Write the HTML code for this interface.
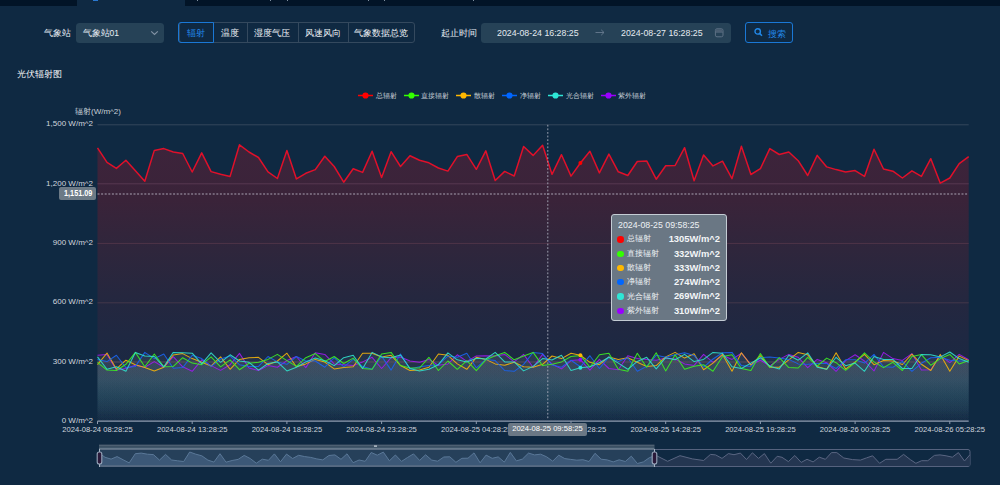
<!DOCTYPE html>
<html><head><meta charset="utf-8"><style>
*{box-sizing:border-box;margin:0;padding:0}
html,body{width:1000px;height:485px;overflow:hidden;background:#0f2942;font-family:"Liberation Sans", sans-serif;color:#fff}
.a{position:absolute;white-space:nowrap}
.t{position:absolute;white-space:nowrap;line-height:12px}
.sx{display:inline-block;transform-origin:0 50%}
</style></head><body>
<div class="a" style="left:0;top:0;width:1000px;height:6px;background:#021427"></div>
<div class="a" style="left:77px;top:0;width:108px;height:6px;background:#0f2942"></div>
<div class="a" style="left:93px;top:0;width:5px;height:1px;background:#2a78d0"></div>
<div class="a" style="left:197px;top:0;width:1px;height:1px;background:#8090a0"></div>
<div class="a" style="left:270px;top:0;width:1px;height:1px;background:#8090a0"></div>
<div class="a" style="left:287px;top:0;width:1px;height:1px;background:#8090a0"></div>
<div class="a" style="left:368px;top:0;width:1px;height:1px;background:#8090a0"></div>
<div class="a" style="left:384px;top:0;width:1px;height:1px;background:#8090a0"></div>
<div class="a" style="left:473px;top:0;width:1px;height:1px;background:#8090a0"></div>
<div class="t" style="left:44px;top:27px;font-size:8.5px;color:#e8eef4">气象站</div>
<div class="a" style="left:76px;top:22.5px;width:88px;height:20px;background:#264257;border-radius:3.5px"></div>
<div class="t" style="left:82.5px;top:27px;font-size:8.5px;color:#e8eef4">气象站01</div>
<svg class="a" style="left:150px;top:30px" width="9" height="6"><path d="M1.2 1.4 L4.5 4.4 L7.8 1.4" fill="none" stroke="#8292a4" stroke-width="1.2"/></svg>
<div class="a" style="left:178.5px;top:22.2px;width:236px;height:20.6px;border:1px solid #34495e;border-radius:3px"></div>
<div class="a" style="left:246.6px;top:23px;width:1px;height:19.5px;background:#34495e"></div>
<div class="a" style="left:297.5px;top:23px;width:1px;height:19.5px;background:#34495e"></div>
<div class="a" style="left:347.5px;top:23px;width:1px;height:19.5px;background:#34495e"></div>
<div class="a" style="left:178.3px;top:22.2px;width:35.7px;height:20.6px;border:1.5px solid #1a78d6;border-radius:3px 0 0 3px"></div>
<div class="t" style="left:178.5px;width:35.5px;top:27.2px;text-align:center;font-size:8.5px;color:#2288e8">辐射</div>
<div class="t" style="left:214px;width:32.599999999999994px;top:27.2px;text-align:center;font-size:8.5px;color:#eef2f6">温度</div>
<div class="t" style="left:246.6px;width:50.900000000000006px;top:27.2px;text-align:center;font-size:8.5px;color:#eef2f6">湿度气压</div>
<div class="t" style="left:297.5px;width:50.0px;top:27.2px;text-align:center;font-size:8.5px;color:#eef2f6">风速风向</div>
<div class="t" style="left:347.5px;width:67.0px;top:27.2px;text-align:center;font-size:8.5px;color:#eef2f6">气象数据总览</div>
<div class="t" style="left:440.5px;top:27px;font-size:8.5px;color:#e8eef4">起止时间</div>
<div class="a" style="left:481px;top:22.5px;width:250px;height:20.3px;background:#264257;border-radius:3.5px"></div>
<div class="t" style="left:497.4px;top:26.5px;font-size:9.9px;color:#e4eaf0"><span class="sx" style="transform:scaleX(.89)">2024-08-24 16:28:25</span></div>
<svg class="a" style="left:594px;top:28px" width="12" height="9"><path d="M1.5 4.5 H10 M7.2 1.8 L10 4.5 L7.2 7.2" fill="none" stroke="#667a8e" stroke-width="0.9"/></svg>
<div class="t" style="left:620.6px;top:26.5px;font-size:9.9px;color:#e4eaf0"><span class="sx" style="transform:scaleX(.89)">2024-08-27 16:28:25</span></div>
<svg class="a" style="left:714px;top:28px" width="11" height="10"><rect x="1.4" y="0.8" width="7.6" height="8" rx="1.6" fill="none" stroke="#5e7286" stroke-width="1"/><rect x="1.9" y="1.3" width="6.6" height="2.6" fill="#4a5e72"/><path d="M1.6 4.2 H8.8" stroke="#5e7286" stroke-width="0.8"/></svg>
<div class="a" style="left:745px;top:22.3px;width:47.6px;height:20.4px;border:1.4px solid #1a78d6;border-radius:3px"></div>
<svg class="a" style="left:753px;top:28px" width="10" height="10"><circle cx="4.7" cy="3.4" r="2.7" fill="none" stroke="#2288e8" stroke-width="1.4"/><path d="M6.6 5.4 L9 7.8" stroke="#2288e8" stroke-width="1.5"/></svg>
<div class="t" style="left:767.6px;top:27.5px;font-size:8.5px;color:#2288e8">搜索</div>
<div class="t" style="left:16.5px;top:68px;font-size:9.4px;color:#f4f6f8">光伏辐射图</div>
<svg class="a" style="left:358.2px;top:91px" width="16" height="9"><path d="M0 4.5 H15" stroke="#ff0000" stroke-width="1.5"/><circle cx="7.5" cy="4.5" r="3.1" fill="#ff0000"/></svg>
<div class="t" style="left:375.8px;top:89.5px;font-size:7.3px;color:#c8d0d8">总辐射</div>
<svg class="a" style="left:403.7px;top:91px" width="16" height="9"><path d="M0 4.5 H15" stroke="#33ff00" stroke-width="1.5"/><circle cx="7.5" cy="4.5" r="3.1" fill="#33ff00"/></svg>
<div class="t" style="left:421px;top:89.5px;font-size:7.3px;color:#c8d0d8">直接辐射</div>
<svg class="a" style="left:456.4px;top:91px" width="16" height="9"><path d="M0 4.5 H15" stroke="#ffb800" stroke-width="1.5"/><circle cx="7.5" cy="4.5" r="3.1" fill="#ffb800"/></svg>
<div class="t" style="left:474.4px;top:89.5px;font-size:7.3px;color:#c8d0d8">散辐射</div>
<svg class="a" style="left:502.2px;top:91px" width="16" height="9"><path d="M0 4.5 H15" stroke="#0066ff" stroke-width="1.5"/><circle cx="7.5" cy="4.5" r="3.1" fill="#0066ff"/></svg>
<div class="t" style="left:520px;top:89.5px;font-size:7.3px;color:#c8d0d8">净辐射</div>
<svg class="a" style="left:548px;top:91px" width="16" height="9"><path d="M0 4.5 H15" stroke="#2ee6d6" stroke-width="1.5"/><circle cx="7.5" cy="4.5" r="3.1" fill="#2ee6d6"/></svg>
<div class="t" style="left:565.7px;top:89.5px;font-size:7.3px;color:#c8d0d8">光合辐射</div>
<svg class="a" style="left:600.7px;top:91px" width="16" height="9"><path d="M0 4.5 H15" stroke="#9900ff" stroke-width="1.5"/><circle cx="7.5" cy="4.5" r="3.1" fill="#9900ff"/></svg>
<div class="t" style="left:618.4px;top:89.5px;font-size:7.3px;color:#c8d0d8">紫外辐射</div>
<div class="t" style="left:75px;top:105.5px;font-size:8px;color:#c8d0d8">辐射(W/m^2)</div>
<div class="t" style="right:907px;top:118.4px;text-align:right;font-size:8px;color:#d0d6de">1,500 W/m^2</div>
<div class="t" style="right:907px;top:177.8px;text-align:right;font-size:8px;color:#d0d6de">1,200 W/m^2</div>
<div class="t" style="right:907px;top:237.1px;text-align:right;font-size:8px;color:#d0d6de">900 W/m^2</div>
<div class="t" style="right:907px;top:296.4px;text-align:right;font-size:8px;color:#d0d6de">600 W/m^2</div>
<div class="t" style="right:907px;top:355.7px;text-align:right;font-size:8px;color:#d0d6de">300 W/m^2</div>
<div class="t" style="right:907px;top:415.0px;text-align:right;font-size:8px;color:#d0d6de">0 W/m^2</div>
<svg class="a" style="left:0;top:0" width="1000" height="485">
<defs>
<linearGradient id="gr" x1="0" y1="145" x2="0" y2="419.3" gradientUnits="userSpaceOnUse"><stop offset="0" stop-color="#3d243b"/><stop offset="0.2" stop-color="#3a2339"/><stop offset="0.38" stop-color="#2f263c"/><stop offset="0.55" stop-color="#25273f"/><stop offset="0.69" stop-color="#1f2842"/><stop offset="1" stop-color="#142a44"/></linearGradient>
<linearGradient id="gl" x1="0" y1="352" x2="0" y2="419.3" gradientUnits="userSpaceOnUse"><stop offset="0" stop-color="#8ba8ae" stop-opacity="0.07"/><stop offset="0.297" stop-color="#8ba8ae" stop-opacity="0.066"/><stop offset="0.416" stop-color="#74a8b1" stop-opacity="0.069"/><stop offset="0.669" stop-color="#57a8af" stop-opacity="0.046"/><stop offset="0.862" stop-color="#57a8af" stop-opacity="0.025"/><stop offset="0.92" stop-color="#57a8af" stop-opacity="0.014"/><stop offset="1" stop-color="#57a8af" stop-opacity="0.005"/></linearGradient>
</defs>
<path d="M97.5 147.9 L107.0 162.4 L116.4 168.4 L125.9 160.3 L135.4 170.8 L144.8 181.3 L154.3 150.4 L163.8 148.6 L173.3 152.0 L182.7 153.5 L192.2 172.0 L201.7 152.9 L211.1 171.6 L220.6 174.3 L230.1 176.4 L239.5 144.8 L249.0 152.0 L258.5 157.5 L268.0 171.8 L277.4 178.5 L286.9 150.4 L296.4 178.9 L305.8 173.3 L315.3 169.6 L324.8 156.2 L334.2 166.5 L343.7 182.2 L353.2 168.7 L362.6 172.4 L372.1 151.3 L381.6 177.4 L391.1 151.7 L400.5 166.5 L410.0 155.7 L419.5 160.3 L428.9 162.8 L438.4 168.0 L447.9 171.1 L457.3 156.6 L466.8 154.4 L476.3 169.3 L485.8 150.8 L495.2 180.5 L504.7 171.4 L514.2 176.0 L523.6 146.5 L533.1 155.4 L542.6 145.2 L552.0 174.3 L561.5 154.7 L571.0 176.1 L580.4 163.0 L589.9 151.3 L599.4 172.9 L608.9 154.1 L618.3 171.8 L627.8 175.5 L637.3 161.5 L646.7 160.9 L656.2 179.2 L665.7 165.7 L675.1 165.5 L684.6 147.7 L694.1 180.7 L703.6 155.0 L713.0 165.9 L722.5 161.2 L732.0 178.6 L741.4 146.3 L750.9 174.5 L760.4 168.6 L769.8 148.6 L779.3 154.5 L788.8 152.0 L798.2 160.7 L807.7 175.5 L817.2 155.4 L826.7 166.9 L836.1 169.6 L845.6 172.1 L855.1 170.6 L864.5 176.4 L874.0 149.2 L883.5 169.0 L892.9 171.2 L902.4 178.0 L911.9 170.8 L921.4 176.4 L930.8 158.7 L940.3 183.2 L949.8 178.0 L959.2 163.6 L968.7 156.6 L968.7 421.0 L97.5 421.0 Z" fill="url(#gr)"/>
<path d="M97.5 355.3 L107.0 354.4 L116.4 370.1 L125.9 368.5 L135.4 365.2 L144.8 367.2 L154.3 361.6 L163.8 367.2 L173.3 356.7 L182.7 366.8 L192.2 371.3 L201.7 359.8 L211.1 365.6 L220.6 370.4 L230.1 364.7 L239.5 353.4 L249.0 368.0 L258.5 370.5 L268.0 365.6 L277.4 367.2 L286.9 360.6 L296.4 356.5 L305.8 367.6 L315.3 352.8 L324.8 354.4 L334.2 363.9 L343.7 364.7 L353.2 365.6 L362.6 361.9 L372.1 357.3 L381.6 368.5 L391.1 357.7 L400.5 357.1 L410.0 361.0 L419.5 362.3 L428.9 359.4 L438.4 365.2 L447.9 363.9 L457.3 354.8 L466.8 361.4 L476.3 355.9 L485.8 355.7 L495.2 356.1 L504.7 354.4 L514.2 361.9 L523.6 354.4 L533.1 367.2 L542.6 354.4 L552.0 364.0 L561.5 368.9 L571.0 360.6 L580.4 359.7 L589.9 370.1 L599.4 359.4 L608.9 368.5 L618.3 369.7 L627.8 355.7 L637.3 358.6 L646.7 359.4 L656.2 360.2 L665.7 358.1 L675.1 359.0 L684.6 363.9 L694.1 365.4 L703.6 354.4 L713.0 362.3 L722.5 355.3 L732.0 359.4 L741.4 353.2 L750.9 364.7 L760.4 360.2 L769.8 366.0 L779.3 359.4 L788.8 354.4 L798.2 357.3 L807.7 367.6 L817.2 359.4 L826.7 362.7 L836.1 371.3 L845.6 360.6 L855.1 354.8 L864.5 361.0 L874.0 370.9 L883.5 352.4 L892.9 358.6 L902.4 360.4 L911.9 353.6 L921.4 370.0 L930.8 369.7 L940.3 355.3 L949.8 362.7 L959.2 354.4 L968.7 359.8 L968.7 421.0 L97.5 421.0 Z" fill="url(#gl)"/>
<path d="M97.5 364.7 L107.0 353.0 L116.4 368.9 L125.9 360.2 L135.4 364.7 L144.8 367.6 L154.3 370.9 L163.8 367.2 L173.3 355.0 L182.7 353.6 L192.2 358.6 L201.7 362.3 L211.1 366.0 L220.6 356.9 L230.1 369.3 L239.5 359.4 L249.0 357.7 L258.5 357.3 L268.0 364.7 L277.4 361.0 L286.9 353.2 L296.4 366.8 L305.8 363.9 L315.3 359.4 L324.8 362.1 L334.2 368.9 L343.7 367.6 L353.2 366.8 L362.6 353.2 L372.1 353.2 L381.6 356.9 L391.1 355.3 L400.5 365.5 L410.0 370.5 L419.5 370.1 L428.9 367.2 L438.4 354.0 L447.9 355.3 L457.3 363.9 L466.8 369.3 L476.3 357.3 L485.8 359.4 L495.2 363.9 L504.7 365.2 L514.2 362.3 L523.6 366.8 L533.1 367.2 L542.6 364.3 L552.0 356.0 L561.5 358.6 L571.0 353.2 L580.4 355.2 L589.9 362.3 L599.4 364.7 L608.9 356.9 L618.3 359.4 L627.8 357.7 L637.3 362.3 L646.7 366.4 L656.2 365.6 L665.7 356.9 L675.1 352.4 L684.6 358.1 L694.1 353.8 L703.6 369.7 L713.0 363.1 L722.5 354.4 L732.0 371.2 L741.4 352.8 L750.9 365.2 L760.4 355.7 L769.8 367.2 L779.3 367.2 L788.8 359.8 L798.2 352.4 L807.7 354.8 L817.2 366.4 L826.7 369.3 L836.1 352.8 L845.6 369.1 L855.1 361.9 L864.5 354.4 L874.0 364.7 L883.5 360.6 L892.9 361.0 L902.4 364.5 L911.9 354.2 L921.4 364.3 L930.8 370.5 L940.3 354.4 L949.8 371.3 L959.2 356.1 L968.7 360.6 L968.7 421.0 L97.5 421.0 Z" fill="url(#gl)"/>
<path d="M97.5 359.4 L107.0 361.6 L116.4 355.3 L125.9 367.6 L135.4 366.4 L144.8 352.4 L154.3 358.6 L163.8 354.0 L173.3 368.2 L182.7 367.6 L192.2 355.3 L201.7 358.6 L211.1 366.4 L220.6 359.0 L230.1 356.1 L239.5 364.7 L249.0 366.6 L258.5 366.4 L268.0 356.5 L277.4 361.9 L286.9 364.3 L296.4 356.5 L305.8 361.0 L315.3 361.0 L324.8 367.2 L334.2 357.7 L343.7 366.8 L353.2 359.4 L362.6 366.4 L372.1 369.3 L381.6 356.1 L391.1 370.1 L400.5 354.0 L410.0 368.9 L419.5 366.8 L428.9 365.6 L438.4 364.7 L447.9 356.1 L457.3 357.3 L466.8 353.2 L476.3 367.8 L485.8 359.4 L495.2 360.6 L504.7 370.5 L514.2 371.3 L523.6 364.3 L533.1 352.4 L542.6 353.6 L552.0 365.1 L561.5 367.2 L571.0 360.2 L580.4 366.8 L589.9 355.7 L599.4 368.5 L608.9 356.9 L618.3 361.4 L627.8 357.7 L637.3 371.3 L646.7 366.4 L656.2 355.3 L665.7 357.3 L675.1 354.8 L684.6 352.8 L694.1 355.4 L703.6 367.2 L713.0 359.0 L722.5 352.8 L732.0 352.4 L741.4 365.6 L750.9 366.4 L760.4 357.7 L769.8 357.1 L779.3 358.1 L788.8 359.4 L798.2 363.9 L807.7 364.3 L817.2 363.5 L826.7 363.5 L836.1 368.5 L845.6 359.8 L855.1 359.8 L864.5 363.1 L874.0 354.4 L883.5 366.8 L892.9 367.2 L902.4 361.4 L911.9 371.3 L921.4 363.3 L930.8 357.7 L940.3 357.3 L949.8 360.2 L959.2 361.0 L968.7 361.0 L968.7 421.0 L97.5 421.0 Z" fill="url(#gl)"/>
<path d="M97.5 362.3 L107.0 370.1 L116.4 370.5 L125.9 364.3 L135.4 352.4 L144.8 366.8 L154.3 354.0 L163.8 366.8 L173.3 366.4 L182.7 357.7 L192.2 363.1 L201.7 364.7 L211.1 356.9 L220.6 366.8 L230.1 359.8 L239.5 369.7 L249.0 363.3 L258.5 362.3 L268.0 359.4 L277.4 354.4 L286.9 360.6 L296.4 366.4 L305.8 357.7 L315.3 353.6 L324.8 361.5 L334.2 356.5 L343.7 363.5 L353.2 358.1 L362.6 368.5 L372.1 369.3 L381.6 354.0 L391.1 352.4 L400.5 365.6 L410.0 368.0 L419.5 368.0 L428.9 357.3 L438.4 370.5 L447.9 361.0 L457.3 369.3 L466.8 360.6 L476.3 370.7 L485.8 359.8 L495.2 355.7 L504.7 352.4 L514.2 359.8 L523.6 356.1 L533.1 352.4 L542.6 365.6 L552.0 364.3 L561.5 361.9 L571.0 356.5 L580.4 355.4 L589.9 367.2 L599.4 354.8 L608.9 353.2 L618.3 369.3 L627.8 371.3 L637.3 353.2 L646.7 367.2 L656.2 352.8 L665.7 370.9 L675.1 354.8 L684.6 369.3 L694.1 366.2 L703.6 364.7 L713.0 371.2 L722.5 356.5 L732.0 354.8 L741.4 368.5 L750.9 370.5 L760.4 353.6 L769.8 367.4 L779.3 357.7 L788.8 367.6 L798.2 368.0 L807.7 357.3 L817.2 366.0 L826.7 358.1 L836.1 362.7 L845.6 370.3 L855.1 362.7 L864.5 352.8 L874.0 361.9 L883.5 367.6 L892.9 362.3 L902.4 370.5 L911.9 356.5 L921.4 354.6 L930.8 365.2 L940.3 358.6 L949.8 354.4 L959.2 363.9 L968.7 360.6 L968.7 421.0 L97.5 421.0 Z" fill="url(#gl)"/>
<path d="M97.5 356.9 L107.0 369.3 L116.4 366.8 L125.9 371.2 L135.4 352.4 L144.8 356.1 L154.3 356.5 L163.8 366.8 L173.3 352.4 L182.7 352.8 L192.2 353.2 L201.7 363.9 L211.1 352.8 L220.6 362.3 L230.1 354.8 L239.5 361.0 L249.0 362.3 L258.5 370.1 L268.0 363.5 L277.4 361.9 L286.9 370.9 L296.4 367.2 L305.8 361.9 L315.3 358.1 L324.8 360.8 L334.2 365.6 L343.7 357.7 L353.2 355.3 L362.6 368.5 L372.1 352.4 L381.6 356.9 L391.1 357.7 L400.5 355.0 L410.0 368.5 L419.5 370.9 L428.9 369.3 L438.4 364.7 L447.9 352.8 L457.3 359.8 L466.8 361.9 L476.3 358.3 L485.8 359.0 L495.2 352.4 L504.7 361.9 L514.2 361.9 L523.6 370.9 L533.1 366.4 L542.6 358.6 L552.0 360.0 L561.5 355.3 L571.0 370.5 L580.4 367.8 L589.9 366.8 L599.4 362.7 L608.9 357.3 L618.3 363.1 L627.8 369.3 L637.3 361.4 L646.7 357.3 L656.2 368.9 L665.7 357.7 L675.1 359.8 L684.6 354.4 L694.1 361.6 L703.6 359.4 L713.0 352.4 L722.5 353.2 L732.0 366.8 L741.4 368.5 L750.9 363.1 L760.4 357.7 L769.8 366.2 L779.3 368.9 L788.8 355.3 L798.2 360.2 L807.7 352.8 L817.2 367.2 L826.7 369.3 L836.1 357.3 L845.6 365.7 L855.1 363.1 L864.5 371.3 L874.0 356.5 L883.5 359.4 L892.9 359.4 L902.4 368.5 L911.9 368.5 L921.4 354.5 L930.8 354.8 L940.3 356.9 L949.8 352.0 L959.2 358.6 L968.7 362.3 L968.7 421.0 L97.5 421.0 Z" fill="url(#gl)"/>
<g stroke-width="1"><path d="M97.5 124.8 H968.7" stroke="#34475c"/><path d="M97.5 183.8 H968.7" stroke="#583850"/><path d="M97.5 243.4 H968.7" stroke="#4f3448"/><path d="M97.5 302.8 H968.7" stroke="#44384a"/><path d="M97.5 362.0 H968.7" stroke="#5a4a5c"/></g>
<path d="M97.5 194 H968.7" stroke="#aaa4b4" stroke-width="1" stroke-dasharray="2 1.6"/>
<g fill="none" stroke-width="1.05" stroke-linejoin="round" stroke-opacity="0.9">
<path d="M97.5 355.3 L107.0 354.4 L116.4 370.1 L125.9 368.5 L135.4 365.2 L144.8 367.2 L154.3 361.6 L163.8 367.2 L173.3 356.7 L182.7 366.8 L192.2 371.3 L201.7 359.8 L211.1 365.6 L220.6 370.4 L230.1 364.7 L239.5 353.4 L249.0 368.0 L258.5 370.5 L268.0 365.6 L277.4 367.2 L286.9 360.6 L296.4 356.5 L305.8 367.6 L315.3 352.8 L324.8 354.4 L334.2 363.9 L343.7 364.7 L353.2 365.6 L362.6 361.9 L372.1 357.3 L381.6 368.5 L391.1 357.7 L400.5 357.1 L410.0 361.0 L419.5 362.3 L428.9 359.4 L438.4 365.2 L447.9 363.9 L457.3 354.8 L466.8 361.4 L476.3 355.9 L485.8 355.7 L495.2 356.1 L504.7 354.4 L514.2 361.9 L523.6 354.4 L533.1 367.2 L542.6 354.4 L552.0 364.0 L561.5 368.9 L571.0 360.6 L580.4 359.7 L589.9 370.1 L599.4 359.4 L608.9 368.5 L618.3 369.7 L627.8 355.7 L637.3 358.6 L646.7 359.4 L656.2 360.2 L665.7 358.1 L675.1 359.0 L684.6 363.9 L694.1 365.4 L703.6 354.4 L713.0 362.3 L722.5 355.3 L732.0 359.4 L741.4 353.2 L750.9 364.7 L760.4 360.2 L769.8 366.0 L779.3 359.4 L788.8 354.4 L798.2 357.3 L807.7 367.6 L817.2 359.4 L826.7 362.7 L836.1 371.3 L845.6 360.6 L855.1 354.8 L864.5 361.0 L874.0 370.9 L883.5 352.4 L892.9 358.6 L902.4 360.4 L911.9 353.6 L921.4 370.0 L930.8 369.7 L940.3 355.3 L949.8 362.7 L959.2 354.4 L968.7 359.8" stroke="#9d1aee"/>
<path d="M97.5 364.7 L107.0 353.0 L116.4 368.9 L125.9 360.2 L135.4 364.7 L144.8 367.6 L154.3 370.9 L163.8 367.2 L173.3 355.0 L182.7 353.6 L192.2 358.6 L201.7 362.3 L211.1 366.0 L220.6 356.9 L230.1 369.3 L239.5 359.4 L249.0 357.7 L258.5 357.3 L268.0 364.7 L277.4 361.0 L286.9 353.2 L296.4 366.8 L305.8 363.9 L315.3 359.4 L324.8 362.1 L334.2 368.9 L343.7 367.6 L353.2 366.8 L362.6 353.2 L372.1 353.2 L381.6 356.9 L391.1 355.3 L400.5 365.5 L410.0 370.5 L419.5 370.1 L428.9 367.2 L438.4 354.0 L447.9 355.3 L457.3 363.9 L466.8 369.3 L476.3 357.3 L485.8 359.4 L495.2 363.9 L504.7 365.2 L514.2 362.3 L523.6 366.8 L533.1 367.2 L542.6 364.3 L552.0 356.0 L561.5 358.6 L571.0 353.2 L580.4 355.2 L589.9 362.3 L599.4 364.7 L608.9 356.9 L618.3 359.4 L627.8 357.7 L637.3 362.3 L646.7 366.4 L656.2 365.6 L665.7 356.9 L675.1 352.4 L684.6 358.1 L694.1 353.8 L703.6 369.7 L713.0 363.1 L722.5 354.4 L732.0 371.2 L741.4 352.8 L750.9 365.2 L760.4 355.7 L769.8 367.2 L779.3 367.2 L788.8 359.8 L798.2 352.4 L807.7 354.8 L817.2 366.4 L826.7 369.3 L836.1 352.8 L845.6 369.1 L855.1 361.9 L864.5 354.4 L874.0 364.7 L883.5 360.6 L892.9 361.0 L902.4 364.5 L911.9 354.2 L921.4 364.3 L930.8 370.5 L940.3 354.4 L949.8 371.3 L959.2 356.1 L968.7 360.6" stroke="#f5b40a"/>
<path d="M97.5 359.4 L107.0 361.6 L116.4 355.3 L125.9 367.6 L135.4 366.4 L144.8 352.4 L154.3 358.6 L163.8 354.0 L173.3 368.2 L182.7 367.6 L192.2 355.3 L201.7 358.6 L211.1 366.4 L220.6 359.0 L230.1 356.1 L239.5 364.7 L249.0 366.6 L258.5 366.4 L268.0 356.5 L277.4 361.9 L286.9 364.3 L296.4 356.5 L305.8 361.0 L315.3 361.0 L324.8 367.2 L334.2 357.7 L343.7 366.8 L353.2 359.4 L362.6 366.4 L372.1 369.3 L381.6 356.1 L391.1 370.1 L400.5 354.0 L410.0 368.9 L419.5 366.8 L428.9 365.6 L438.4 364.7 L447.9 356.1 L457.3 357.3 L466.8 353.2 L476.3 367.8 L485.8 359.4 L495.2 360.6 L504.7 370.5 L514.2 371.3 L523.6 364.3 L533.1 352.4 L542.6 353.6 L552.0 365.1 L561.5 367.2 L571.0 360.2 L580.4 366.8 L589.9 355.7 L599.4 368.5 L608.9 356.9 L618.3 361.4 L627.8 357.7 L637.3 371.3 L646.7 366.4 L656.2 355.3 L665.7 357.3 L675.1 354.8 L684.6 352.8 L694.1 355.4 L703.6 367.2 L713.0 359.0 L722.5 352.8 L732.0 352.4 L741.4 365.6 L750.9 366.4 L760.4 357.7 L769.8 357.1 L779.3 358.1 L788.8 359.4 L798.2 363.9 L807.7 364.3 L817.2 363.5 L826.7 363.5 L836.1 368.5 L845.6 359.8 L855.1 359.8 L864.5 363.1 L874.0 354.4 L883.5 366.8 L892.9 367.2 L902.4 361.4 L911.9 371.3 L921.4 363.3 L930.8 357.7 L940.3 357.3 L949.8 360.2 L959.2 361.0 L968.7 361.0" stroke="#1a64f0"/>
<path d="M97.5 362.3 L107.0 370.1 L116.4 370.5 L125.9 364.3 L135.4 352.4 L144.8 366.8 L154.3 354.0 L163.8 366.8 L173.3 366.4 L182.7 357.7 L192.2 363.1 L201.7 364.7 L211.1 356.9 L220.6 366.8 L230.1 359.8 L239.5 369.7 L249.0 363.3 L258.5 362.3 L268.0 359.4 L277.4 354.4 L286.9 360.6 L296.4 366.4 L305.8 357.7 L315.3 353.6 L324.8 361.5 L334.2 356.5 L343.7 363.5 L353.2 358.1 L362.6 368.5 L372.1 369.3 L381.6 354.0 L391.1 352.4 L400.5 365.6 L410.0 368.0 L419.5 368.0 L428.9 357.3 L438.4 370.5 L447.9 361.0 L457.3 369.3 L466.8 360.6 L476.3 370.7 L485.8 359.8 L495.2 355.7 L504.7 352.4 L514.2 359.8 L523.6 356.1 L533.1 352.4 L542.6 365.6 L552.0 364.3 L561.5 361.9 L571.0 356.5 L580.4 355.4 L589.9 367.2 L599.4 354.8 L608.9 353.2 L618.3 369.3 L627.8 371.3 L637.3 353.2 L646.7 367.2 L656.2 352.8 L665.7 370.9 L675.1 354.8 L684.6 369.3 L694.1 366.2 L703.6 364.7 L713.0 371.2 L722.5 356.5 L732.0 354.8 L741.4 368.5 L750.9 370.5 L760.4 353.6 L769.8 367.4 L779.3 357.7 L788.8 367.6 L798.2 368.0 L807.7 357.3 L817.2 366.0 L826.7 358.1 L836.1 362.7 L845.6 370.3 L855.1 362.7 L864.5 352.8 L874.0 361.9 L883.5 367.6 L892.9 362.3 L902.4 370.5 L911.9 356.5 L921.4 354.6 L930.8 365.2 L940.3 358.6 L949.8 354.4 L959.2 363.9 L968.7 360.6" stroke="#3cf022"/>
<path d="M97.5 356.9 L107.0 369.3 L116.4 366.8 L125.9 371.2 L135.4 352.4 L144.8 356.1 L154.3 356.5 L163.8 366.8 L173.3 352.4 L182.7 352.8 L192.2 353.2 L201.7 363.9 L211.1 352.8 L220.6 362.3 L230.1 354.8 L239.5 361.0 L249.0 362.3 L258.5 370.1 L268.0 363.5 L277.4 361.9 L286.9 370.9 L296.4 367.2 L305.8 361.9 L315.3 358.1 L324.8 360.8 L334.2 365.6 L343.7 357.7 L353.2 355.3 L362.6 368.5 L372.1 352.4 L381.6 356.9 L391.1 357.7 L400.5 355.0 L410.0 368.5 L419.5 370.9 L428.9 369.3 L438.4 364.7 L447.9 352.8 L457.3 359.8 L466.8 361.9 L476.3 358.3 L485.8 359.0 L495.2 352.4 L504.7 361.9 L514.2 361.9 L523.6 370.9 L533.1 366.4 L542.6 358.6 L552.0 360.0 L561.5 355.3 L571.0 370.5 L580.4 367.8 L589.9 366.8 L599.4 362.7 L608.9 357.3 L618.3 363.1 L627.8 369.3 L637.3 361.4 L646.7 357.3 L656.2 368.9 L665.7 357.7 L675.1 359.8 L684.6 354.4 L694.1 361.6 L703.6 359.4 L713.0 352.4 L722.5 353.2 L732.0 366.8 L741.4 368.5 L750.9 363.1 L760.4 357.7 L769.8 366.2 L779.3 368.9 L788.8 355.3 L798.2 360.2 L807.7 352.8 L817.2 367.2 L826.7 369.3 L836.1 357.3 L845.6 365.7 L855.1 363.1 L864.5 371.3 L874.0 356.5 L883.5 359.4 L892.9 359.4 L902.4 368.5 L911.9 368.5 L921.4 354.5 L930.8 354.8 L940.3 356.9 L949.8 352.0 L959.2 358.6 L968.7 362.3" stroke="#30e0cc"/>
</g>
<path d="M97.5 147.9 L107.0 162.4 L116.4 168.4 L125.9 160.3 L135.4 170.8 L144.8 181.3 L154.3 150.4 L163.8 148.6 L173.3 152.0 L182.7 153.5 L192.2 172.0 L201.7 152.9 L211.1 171.6 L220.6 174.3 L230.1 176.4 L239.5 144.8 L249.0 152.0 L258.5 157.5 L268.0 171.8 L277.4 178.5 L286.9 150.4 L296.4 178.9 L305.8 173.3 L315.3 169.6 L324.8 156.2 L334.2 166.5 L343.7 182.2 L353.2 168.7 L362.6 172.4 L372.1 151.3 L381.6 177.4 L391.1 151.7 L400.5 166.5 L410.0 155.7 L419.5 160.3 L428.9 162.8 L438.4 168.0 L447.9 171.1 L457.3 156.6 L466.8 154.4 L476.3 169.3 L485.8 150.8 L495.2 180.5 L504.7 171.4 L514.2 176.0 L523.6 146.5 L533.1 155.4 L542.6 145.2 L552.0 174.3 L561.5 154.7 L571.0 176.1 L580.4 163.0 L589.9 151.3 L599.4 172.9 L608.9 154.1 L618.3 171.8 L627.8 175.5 L637.3 161.5 L646.7 160.9 L656.2 179.2 L665.7 165.7 L675.1 165.5 L684.6 147.7 L694.1 180.7 L703.6 155.0 L713.0 165.9 L722.5 161.2 L732.0 178.6 L741.4 146.3 L750.9 174.5 L760.4 168.6 L769.8 148.6 L779.3 154.5 L788.8 152.0 L798.2 160.7 L807.7 175.5 L817.2 155.4 L826.7 166.9 L836.1 169.6 L845.6 172.1 L855.1 170.6 L864.5 176.4 L874.0 149.2 L883.5 169.0 L892.9 171.2 L902.4 178.0 L911.9 170.8 L921.4 176.4 L930.8 158.7 L940.3 183.2 L949.8 178.0 L959.2 163.6 L968.7 156.6" fill="none" stroke="#e0102a" stroke-width="1.5" stroke-linejoin="round"/>
<path d="M547.8 124.8 V420" stroke="#a8aebc" stroke-width="0.9" stroke-dasharray="1.8 1.8"/>
<path d="M97.5 421.2 H968.7" stroke="#8f9cb0" stroke-width="1.2"/>
<g stroke="#8f9cb0" stroke-width="1"><path d="M97.5 421.2 V424"/><path d="M192.2 421.2 V424"/><path d="M286.9 421.2 V424"/><path d="M381.6 421.2 V424"/><path d="M476.3 421.2 V424"/><path d="M571.0 421.2 V424"/><path d="M665.7 421.2 V424"/><path d="M760.4 421.2 V424"/><path d="M855.1 421.2 V424"/><path d="M949.8 421.2 V424"/></g>
<circle cx="580.4" cy="355.2" r="2" fill="#ffb800"/>
<circle cx="580.4" cy="359.7" r="2" fill="#9900ff"/>
<circle cx="580.4" cy="367.8" r="2" fill="#2ee6d6"/>
<circle cx="580.4" cy="163.0" r="2" fill="#ff0000"/>
<rect x="99.5" y="449.5" width="870.5" height="17" rx="2" fill="none" stroke="#56627e" stroke-width="1"/>
<rect x="99.5" y="449.7" width="555.0" height="16.4" fill="#26405a"/>
<path d="M655.5 455.5 L657.2 456.0 L667.6 461.3 L680.0 455.7 L692.4 458.9 L703.6 460.5 L710.5 454.4 L715.6 454.9 L722.0 458.4 L728.4 453.6 L734.0 454.7 L740.4 453.1 L746.5 459.5 L752.4 452.8 L758.5 458.4 L764.4 453.6 L770.8 463.2 L777.2 456.3 L782.0 457.3 L788.4 461.6 L794.8 455.5 L801.2 462.4 L807.0 459.3 L813.1 461.9 L819.3 457.2 L825.4 459.3 L831.5 452.6 L836.8 452.6 L843.8 458.0 L852.5 459.6 L860.4 460.1 L866.5 457.9 L872.6 455.8 L879.6 463.3 L885.8 459.3 L897.1 459.3 L903.6 454.4 L910.3 459.6 L915.9 463.3 L921.6 460.7 L927.8 460.7 L934.4 455.4 L940.0 454.9 L946.1 455.8 L952.3 457.2 L958.4 452.6 L964.5 461.0 L969.8 454.9 L969.8 466 L654.5 466 Z" fill="#243651"/>
<path d="M655.5 455.5 L657.2 456.0 L667.6 461.3 L680.0 455.7 L692.4 458.9 L703.6 460.5 L710.5 454.4 L715.6 454.9 L722.0 458.4 L728.4 453.6 L734.0 454.7 L740.4 453.1 L746.5 459.5 L752.4 452.8 L758.5 458.4 L764.4 453.6 L770.8 463.2 L777.2 456.3 L782.0 457.3 L788.4 461.6 L794.8 455.5 L801.2 462.4 L807.0 459.3 L813.1 461.9 L819.3 457.2 L825.4 459.3 L831.5 452.6 L836.8 452.6 L843.8 458.0 L852.5 459.6 L860.4 460.1 L866.5 457.9 L872.6 455.8 L879.6 463.3 L885.8 459.3 L897.1 459.3 L903.6 454.4 L910.3 459.6 L915.9 463.3 L921.6 460.7 L927.8 460.7 L934.4 455.4 L940.0 454.9 L946.1 455.8 L952.3 457.2 L958.4 452.6 L964.5 461.0 L969.8 454.9" fill="none" stroke="#5a6682" stroke-width="1"/>
<path d="M99.0 452.9 L105.0 457.3 L111.1 459.1 L117.1 456.6 L123.2 459.8 L129.2 462.9 L135.3 453.7 L141.3 453.1 L147.4 454.2 L153.4 454.6 L159.5 460.1 L165.5 454.4 L171.6 460.0 L177.6 460.8 L183.7 461.5 L189.7 452.0 L195.8 454.2 L201.8 455.8 L207.9 460.1 L213.9 462.1 L220.0 453.7 L226.0 462.2 L232.1 460.5 L238.1 459.4 L244.2 455.4 L250.2 458.5 L256.3 463.2 L262.3 459.2 L268.4 460.3 L274.4 453.9 L280.5 461.8 L286.5 454.1 L292.6 458.5 L298.6 455.3 L304.7 456.6 L310.7 457.4 L316.8 458.9 L322.8 459.9 L328.9 455.5 L334.9 454.9 L341.0 459.3 L347.0 453.8 L353.1 462.7 L359.1 460.0 L365.2 461.3 L371.2 452.5 L377.3 455.2 L383.3 452.1 L389.4 460.8 L395.4 455.0 L401.5 461.4 L407.5 457.5 L413.5 453.9 L419.6 460.4 L425.6 454.8 L431.7 460.1 L437.7 461.2 L443.8 457.0 L449.8 456.8 L455.9 462.3 L461.9 458.3 L468.0 458.2 L474.0 452.9 L480.1 462.8 L486.1 455.1 L492.2 458.3 L498.2 456.9 L504.3 462.1 L510.3 452.4 L516.4 460.9 L522.4 459.1 L528.5 453.1 L534.5 454.9 L540.6 454.2 L546.6 456.8 L552.7 461.2 L558.7 455.2 L564.8 458.6 L570.8 459.4 L576.9 460.2 L582.9 459.7 L589.0 461.5 L595.0 453.3 L601.1 459.2 L607.1 459.9 L613.2 461.9 L619.2 459.8 L625.3 461.5 L631.3 456.2 L637.4 463.5 L643.4 461.9 L649.5 457.6 L655.5 455.5 L654.5 466 L99 466 Z" fill="#3c5877"/>
<path d="M99.0 452.9 L105.0 457.3 L111.1 459.1 L117.1 456.6 L123.2 459.8 L129.2 462.9 L135.3 453.7 L141.3 453.1 L147.4 454.2 L153.4 454.6 L159.5 460.1 L165.5 454.4 L171.6 460.0 L177.6 460.8 L183.7 461.5 L189.7 452.0 L195.8 454.2 L201.8 455.8 L207.9 460.1 L213.9 462.1 L220.0 453.7 L226.0 462.2 L232.1 460.5 L238.1 459.4 L244.2 455.4 L250.2 458.5 L256.3 463.2 L262.3 459.2 L268.4 460.3 L274.4 453.9 L280.5 461.8 L286.5 454.1 L292.6 458.5 L298.6 455.3 L304.7 456.6 L310.7 457.4 L316.8 458.9 L322.8 459.9 L328.9 455.5 L334.9 454.9 L341.0 459.3 L347.0 453.8 L353.1 462.7 L359.1 460.0 L365.2 461.3 L371.2 452.5 L377.3 455.2 L383.3 452.1 L389.4 460.8 L395.4 455.0 L401.5 461.4 L407.5 457.5 L413.5 453.9 L419.6 460.4 L425.6 454.8 L431.7 460.1 L437.7 461.2 L443.8 457.0 L449.8 456.8 L455.9 462.3 L461.9 458.3 L468.0 458.2 L474.0 452.9 L480.1 462.8 L486.1 455.1 L492.2 458.3 L498.2 456.9 L504.3 462.1 L510.3 452.4 L516.4 460.9 L522.4 459.1 L528.5 453.1 L534.5 454.9 L540.6 454.2 L546.6 456.8 L552.7 461.2 L558.7 455.2 L564.8 458.6 L570.8 459.4 L576.9 460.2 L582.9 459.7 L589.0 461.5 L595.0 453.3 L601.1 459.2 L607.1 459.9 L613.2 461.9 L619.2 459.8 L625.3 461.5 L631.3 456.2 L637.4 463.5 L643.4 461.9 L649.5 457.6 L655.5 455.5" fill="none" stroke="#5a7898" stroke-width="1"/>
<path d="M99.5 466.1 H654.5" stroke="#5a6e84" stroke-width="1.5"/>
<rect x="99" y="444.6" width="555.5" height="1.6" fill="#4e6072"/>
<rect x="99" y="446.2" width="555.5" height="1.6" fill="#44586a"/>
<rect x="99" y="447.8" width="555.5" height="1.9" fill="#65788a"/>
<path d="M99.5 449 V467" stroke="#a8b4c4" stroke-width="1"/>
<rect x="97.2" y="452" width="4.6" height="12" rx="2" fill="#2a1a3a" stroke="#98a6ba" stroke-width="1.1"/>
<path d="M654.5 449 V467" stroke="#a8b4c4" stroke-width="1"/>
<rect x="652.2" y="452" width="4.6" height="12" rx="2" fill="#2a1a3a" stroke="#98a6ba" stroke-width="1.1"/>
<rect x="374" y="445.5" width="3" height="1.2" fill="#d0d8e0"/>
</svg>
<div class="a" style="left:59px;top:187.2px;width:36.6px;height:12.9px;background:#6c7a86;border-radius:2px"></div><div class="t" style="left:63.5px;top:187.2px;font-size:8.4px;line-height:12.9px;color:#fff;font-weight:bold"><span class="sx" style="transform:scaleX(.87)">1,151.09</span></div>
<div class="t" style="left:47.5px;top:423.5px;width:100px;text-align:center;font-size:7.6px;color:#d0d6de">2024-08-24 08:28:25</div>
<div class="t" style="left:142.2px;top:423.5px;width:100px;text-align:center;font-size:7.6px;color:#d0d6de">2024-08-24 13:28:25</div>
<div class="t" style="left:236.9px;top:423.5px;width:100px;text-align:center;font-size:7.6px;color:#d0d6de">2024-08-24 18:28:25</div>
<div class="t" style="left:331.6px;top:423.5px;width:100px;text-align:center;font-size:7.6px;color:#d0d6de">2024-08-24 23:28:25</div>
<div class="t" style="left:426.3px;top:423.5px;width:100px;text-align:center;font-size:7.6px;color:#d0d6de">2024-08-25 04:28:25</div>
<div class="t" style="left:521.0px;top:423.5px;width:100px;text-align:center;font-size:7.6px;color:#d0d6de">2024-08-25 09:28:25</div>
<div class="t" style="left:615.7px;top:423.5px;width:100px;text-align:center;font-size:7.6px;color:#d0d6de">2024-08-25 14:28:25</div>
<div class="t" style="left:710.4px;top:423.5px;width:100px;text-align:center;font-size:7.6px;color:#d0d6de">2024-08-25 19:28:25</div>
<div class="t" style="left:805.1px;top:423.5px;width:100px;text-align:center;font-size:7.6px;color:#d0d6de">2024-08-26 00:28:25</div>
<div class="t" style="left:899.8px;top:423.5px;width:100px;text-align:center;font-size:7.6px;color:#d0d6de">2024-08-26 05:28:25</div>
<div class="t" style="left:508.2px;top:423.2px;width:78.5px;height:12.6px;background:#6b7885;border-radius:2px;font-size:7.6px;line-height:12.6px;text-align:center;color:#fff">2024-08-25 09:58:25</div>
<div class="a" style="left:611px;top:214.3px;width:115.5px;height:107px;background:#6a7784;border:1px solid #c4ccd4;border-radius:3px"></div>
<div class="t" style="left:617.8px;top:219px;font-size:9.2px;color:#eef2f5"><span class="sx" style="transform:scaleX(.955)">2024-08-25 09:58:25</span></div>
<div class="a" style="left:617.3px;top:236.2px;width:6.4px;height:6.4px;border-radius:50%;background:#ff0000"></div>
<div class="t" style="left:626.9px;top:233.3px;font-size:8.2px;color:#eef2f5">总辐射</div>
<div class="t" style="right:280px;top:233.2px;text-align:right;font-size:9.4px;font-weight:bold;color:#f4f6f8">1305W/m^2</div>
<div class="a" style="left:617.3px;top:250.5px;width:6.4px;height:6.4px;border-radius:50%;background:#33ff00"></div>
<div class="t" style="left:626.9px;top:247.6px;font-size:8.2px;color:#eef2f5">直接辐射</div>
<div class="t" style="right:280px;top:247.5px;text-align:right;font-size:9.4px;font-weight:bold;color:#f4f6f8">332W/m^2</div>
<div class="a" style="left:617.3px;top:264.8px;width:6.4px;height:6.4px;border-radius:50%;background:#ffb800"></div>
<div class="t" style="left:626.9px;top:261.9px;font-size:8.2px;color:#eef2f5">散辐射</div>
<div class="t" style="right:280px;top:261.8px;text-align:right;font-size:9.4px;font-weight:bold;color:#f4f6f8">333W/m^2</div>
<div class="a" style="left:617.3px;top:279.1px;width:6.4px;height:6.4px;border-radius:50%;background:#0066ff"></div>
<div class="t" style="left:626.9px;top:276.2px;font-size:8.2px;color:#eef2f5">净辐射</div>
<div class="t" style="right:280px;top:276.1px;text-align:right;font-size:9.4px;font-weight:bold;color:#f4f6f8">274W/m^2</div>
<div class="a" style="left:617.3px;top:293.4px;width:6.4px;height:6.4px;border-radius:50%;background:#2ee6d6"></div>
<div class="t" style="left:626.9px;top:290.5px;font-size:8.2px;color:#eef2f5">光合辐射</div>
<div class="t" style="right:280px;top:290.4px;text-align:right;font-size:9.4px;font-weight:bold;color:#f4f6f8">269W/m^2</div>
<div class="a" style="left:617.3px;top:307.7px;width:6.4px;height:6.4px;border-radius:50%;background:#9900ff"></div>
<div class="t" style="left:626.9px;top:304.8px;font-size:8.2px;color:#eef2f5">紫外辐射</div>
<div class="t" style="right:280px;top:304.7px;text-align:right;font-size:9.4px;font-weight:bold;color:#f4f6f8">310W/m^2</div>
</body></html>
